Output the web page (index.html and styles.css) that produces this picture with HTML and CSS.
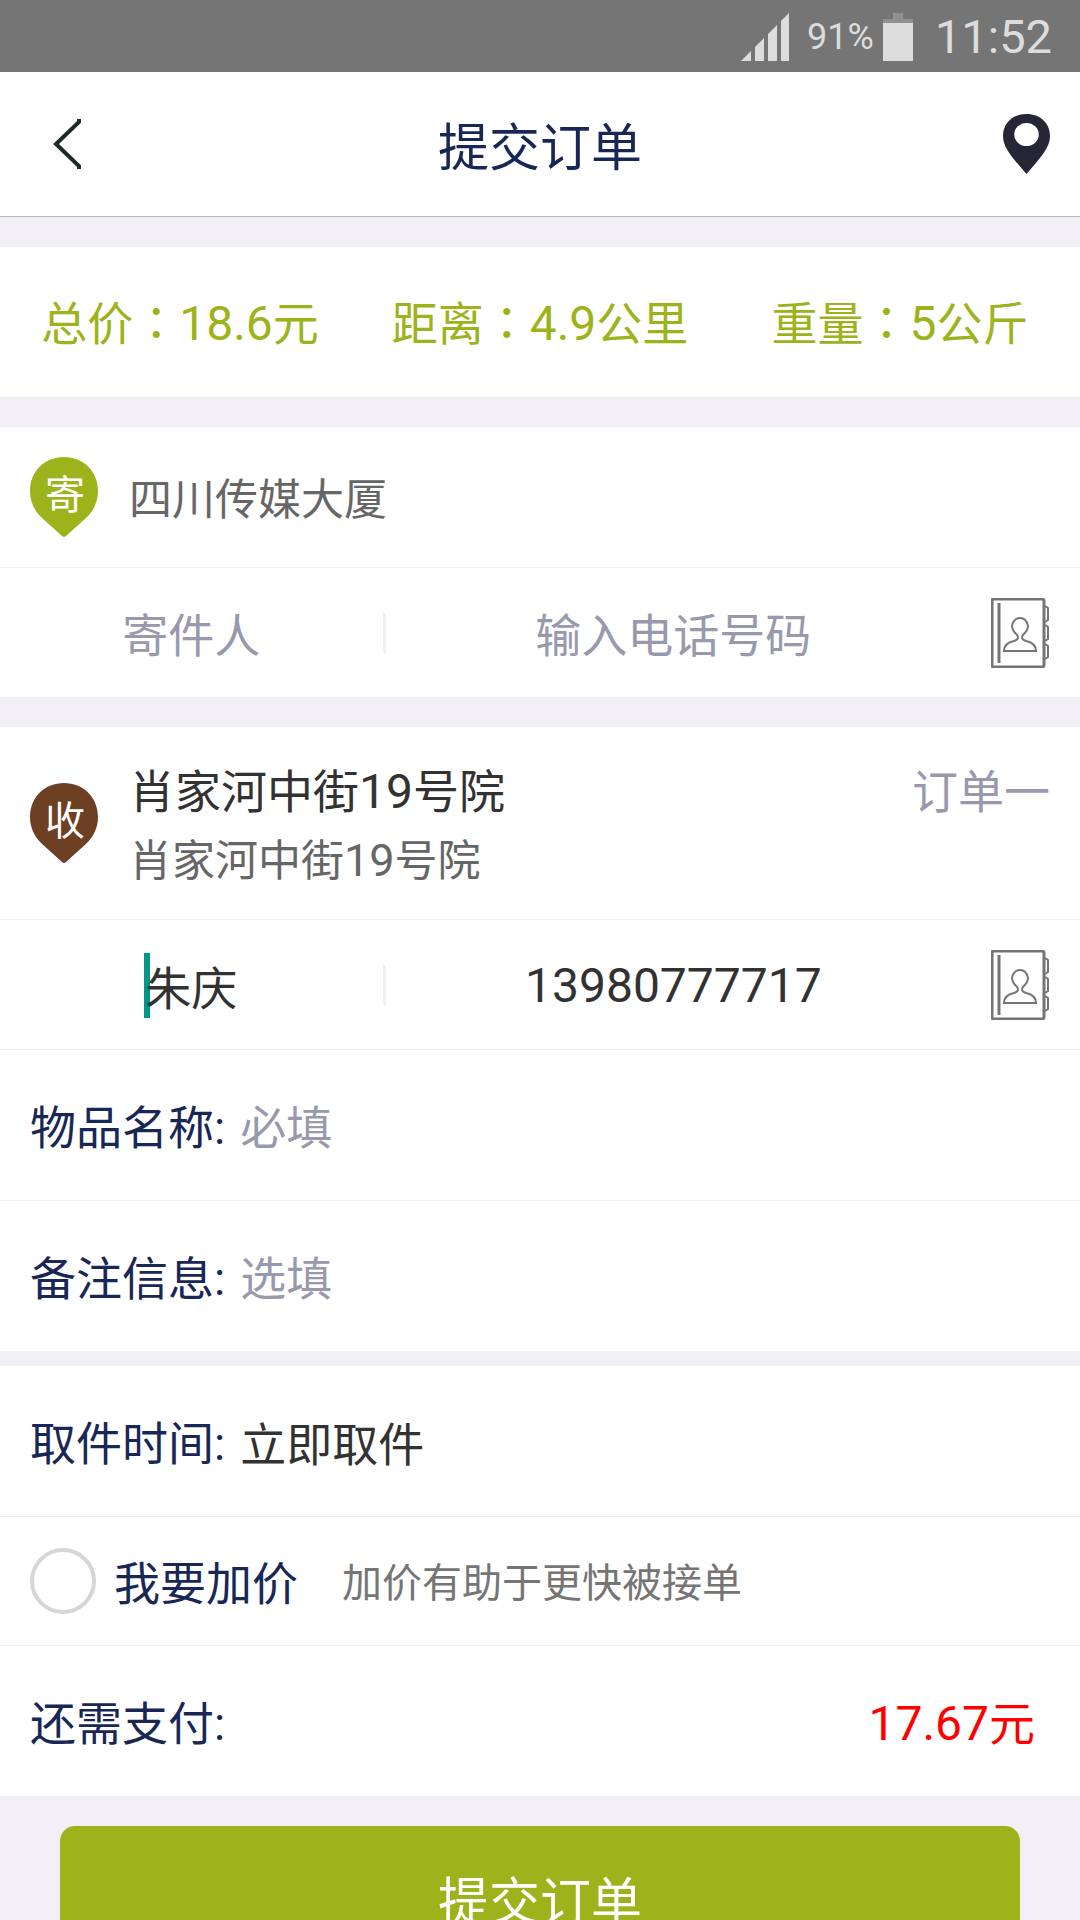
FILE: index.html
```html
<!DOCTYPE html>
<html lang="zh-CN">
<head>
<meta charset="utf-8">
<meta name="viewport" content="width=device-width, initial-scale=1">
<title>提交订单</title>
<link rel="stylesheet" href="styles.css">
</head>
<body>
<div class="screen">
  <div class="status">
    <svg class="status-signal" width="48" height="48" viewBox="0 0 48 48" aria-hidden="true">
      <path d="M0 48L10 38V48ZM14 48V34L23 25V48ZM27 48V21L36 12V48ZM40 48V8L48 0V48Z"/>
    </svg>
    <span class="status-percent">91%</span>
    <svg class="status-battery" width="30" height="48" viewBox="0 0 30 48" aria-hidden="true">
      <path class="battery-empty" d="M10 0H20V6H30V10H0V6H10Z"/>
      <path d="M0 10H30V48H0Z"/>
    </svg>
    <span class="status-time">11:52</span>
  </div>

  <header class="header">
    <button class="icon-button" type="button" aria-label="返回">
      <svg width="30" height="52" viewBox="0 0 30 52" aria-hidden="true">
        <path class="back-stroke" d="M27 1V4L4 26L27 48V51"/>
      </svg>
    </button>
    <h1 class="header-title">提交订单</h1>
    <button class="icon-button icon-button-end" type="button" aria-label="位置">
      <svg width="47" height="60" viewBox="0 0 48 60" preserveAspectRatio="none" aria-hidden="true">
        <path class="marker" fill-rule="evenodd" d="M24 0C10 0 0 9 0 22C0 34 10 44 24 60C38 44 48 34 48 22C48 9 38 0 24 0ZM24 9A12 11 0 1 1 24 32A12 11 0 1 1 24 9Z"/>
      </svg>
    </button>
  </header>

  <main class="content">
    <section class="card summary">
      <span>总价<span class="colon" lang="zh-TW">：</span><span class="num">18.6</span>元</span>
      <span>距离<span class="colon" lang="zh-TW">：</span><span class="num">4.9</span>公里</span>
      <span>重量<span class="colon" lang="zh-TW">：</span><span class="num">5</span>公斤</span>
    </section>

    <section class="card">
      <div class="row address">
        <svg class="pin pin-send" width="68" height="80" viewBox="0 0 68 80" role="img" aria-label="寄">
          <path d="M34 0C15 0 0 14 0 34C0 44 4 53 11 60L32 79Q34 81 36 79L57 60C64 53 68 44 68 34C68 14 53 0 34 0Z"/>
          <text x="35" y="52">寄</text>
        </svg>
        <p class="address-detail address-only">四川传媒大厦</p>
      </div>
      <div class="row contact">
        <div class="contact-name"><input class="input centered" type="text" placeholder="寄件人" aria-label="寄件人"></div>
        <input class="input centered contact-phone" type="tel" placeholder="输入电话号码" aria-label="寄件人电话号码">
        <button class="book-button" type="button" aria-label="通讯录">
          <svg class="book" width="58" height="70" viewBox="0 0 58 70" aria-hidden="true">
            <rect x="1" y="1" width="52" height="68" rx="2"/>
            <path class="book-spine" d="M8 5V65"/>
            <path d="M54 8L57 10V22L54 24M54 27L57 29V41L54 43M54 46L57 48V59L54 61"/>
            <path d="M13 53H45C45 46 40 44 35 43Q29 41 32 37C35 34 37 32 37 28C36 23 33 20 29 20C25 20 22 23 21 28C21 32 23 34 26 37Q29 41 23 43C18 44 13 46 13 53Z"/>
          </svg>
        </button>
      </div>
    </section>

    <section class="card">
      <div class="row address">
        <svg class="pin pin-receive" width="68" height="80" viewBox="0 0 68 80" role="img" aria-label="收">
          <path d="M34 0C15 0 0 14 0 34C0 44 4 53 11 60L32 79Q34 81 36 79L57 60C64 53 68 44 68 34C68 14 53 0 34 0Z"/>
          <text x="35" y="52">收</text>
        </svg>
        <div class="address-text">
          <div class="address-head">
            <h2 class="address-title">肖家河中街<span class="num">19</span>号院</h2>
            <span class="order-index">订单一</span>
          </div>
          <p class="address-detail">肖家河中街<span class="num-small">19</span>号院</p>
        </div>
      </div>
      <div class="row contact">
        <div class="contact-name">
          <span class="caret"></span>
          <input class="input input-filled centered" type="text" value="朱庆" aria-label="收件人">
        </div>
        <input class="input input-filled centered contact-phone contact-number" type="tel" value="13980777717" aria-label="收件人电话号码">
        <button class="book-button" type="button" aria-label="通讯录">
          <svg class="book" width="58" height="70" viewBox="0 0 58 70" aria-hidden="true">
            <rect x="1" y="1" width="52" height="68" rx="2"/>
            <path class="book-spine" d="M8 5V65"/>
            <path d="M54 8L57 10V22L54 24M54 27L57 29V41L54 43M54 46L57 48V59L54 61"/>
            <path d="M13 53H45C45 46 40 44 35 43Q29 41 32 37C35 34 37 32 37 28C36 23 33 20 29 20C25 20 22 23 21 28C21 32 23 34 26 37Q29 41 23 43C18 44 13 46 13 53Z"/>
          </svg>
        </button>
      </div>
      <div class="row field">
        <label class="label" for="goods">物品名称:</label>
        <input class="input" id="goods" type="text" placeholder="必填">
      </div>
      <div class="row field">
        <label class="label" for="remark">备注信息:</label>
        <input class="input" id="remark" type="text" placeholder="选填">
      </div>
    </section>

    <section class="card card-close">
      <div class="row field">
        <label class="label" for="pickup">取件时间:</label>
        <input class="input input-filled" id="pickup" type="text" value="立即取件" readonly>
      </div>
      <div class="row extra">
        <input class="check" id="extra" type="checkbox">
        <label class="label" for="extra">我要加价</label>
        <span class="hint">加价有助于更快被接单</span>
      </div>
      <div class="row field pay">
        <span class="label">还需支付:</span>
        <span class="pay-amount"><span class="num">17.67</span>元</span>
      </div>
    </section>

    <div class="actions">
      <button class="submit" type="button">提交订单</button>
    </div>
  </main>
</div>
</body>
</html>
```
FILE: styles.css
```css
* {
  box-sizing: border-box;
  margin: 0;
}

body {
  background: #f1eff5;
  color: #323232;
  font-family: Roboto, "Noto Sans CJK SC", sans-serif;
  font-size: 46px;
  line-height: 54px;
}

button,
input {
  padding: 0;
  border: 0;
  background: none;
  color: inherit;
  font: inherit;
}

svg {
  display: block;
  flex: none;
}

.num {
  font-size: 48px;
  line-height: 1;
}

.num-small {
  font-size: 45px;
  line-height: 1;
}

.colon {
  font-family: "Noto Sans CJK TC", sans-serif;
  line-height: 1;
}

.screen {
  display: flex;
  flex-direction: column;
  height: 100vh;
}

/* Status bar */
.status {
  display: flex;
  flex: none;
  align-items: center;
  justify-content: flex-end;
  padding: 10px 28px 8px;
  background: #757575;
  color: #dcdcdc;
  fill: #dcdcdc;
}

.status-percent {
  margin: 0 9px 0 18px;
  font-size: 36px;
}

.status-time {
  margin-left: 22px;
  font-size: 47px;
}

.battery-empty {
  fill: #919191;
}

/* Header */
.header {
  display: flex;
  flex: none;
  align-items: center;
  justify-content: space-between;
  padding: 40px 30px;
  border-bottom: 1px solid #b9bcbc;
  background: #fff;
}

.icon-button {
  display: flex;
  justify-content: center;
  min-width: 74px;
}

.icon-button-end {
  justify-content: flex-end;
}

.back-stroke {
  fill: none;
  stroke: #1f2a28;
  stroke-width: 4;
}

.marker {
  fill: #272636;
}

.header-title {
  padding-top: 10px;
  color: #182755;
  font-size: 51px;
  font-weight: 400;
}

/* Cards */
.content {
  flex: 1;
  min-height: 0;
  overflow-y: auto;
  scrollbar-width: none;
}

.card {
  margin-top: 30px;
  background: #fff;
}

.card-close {
  margin-top: 15px;
}

.summary {
  display: grid;
  grid-template-columns: repeat(3, 1fr);
  padding: 50px 0 46px;
  color: #9db31b;
  text-align: center;
}

.row {
  display: flex;
  align-items: center;
  border-bottom: 1px solid #efefef;
}

.row:last-child {
  border-bottom: 0;
}

/* Addresses */
.address {
  gap: 31px;
  padding: 30px;
}

.pin-send {
  fill: #9db31b;
}

.pin-receive {
  fill: #6d4024;
}

.pin text {
  fill: #fff;
  font-size: 40px;
  text-anchor: middle;
}

.address-text {
  flex: 1;
  padding: 8px 0 1px;
}

.address-head {
  display: flex;
  justify-content: space-between;
  margin-bottom: 15px;
}

.address-title {
  font-size: 46px;
  font-weight: 400;
}

.address-detail {
  color: #666;
  font-size: 43px;
}

.address-only {
  padding-top: 6px;
}

.order-index {
  color: #9999ad;
}

/* Contact lines */
.contact {
  padding: 30px 0 29px;
}

.contact-name {
  position: relative;
  display: flex;
  flex: 0 0 calc(100% * 5 / 14);
  align-items: center;
  height: 40px;
  border-right: 3px solid #f1eff5;
}

.contact-phone {
  flex: 1;
}

.contact-number {
  font-size: 48px;
}

.book-button {
  padding: 0 31px 0 30px;
}

.book {
  fill: none;
  stroke: #757575;
  stroke-width: 2;
}

.book rect,
.book-spine {
  stroke-width: 3;
}

.input {
  width: 100%;
  min-width: 0;
  height: 60px;
  padding-top: 6px;
  outline: 0;
}

.input::placeholder {
  color: #9999ad;
  opacity: 1;
}

.input-filled {
  padding-top: 0;
}

.centered {
  position: relative;
  text-align: center;
}

.caret {
  position: absolute;
  left: calc(50% - 47px);
  width: 6px;
  height: 65px;
  background: #009688;
}

/* Fields */
.field {
  gap: 15px;
  padding: 45px 30px;
}

.label,
.hint,
.pay-amount {
  flex: none;
  padding-top: 6px;
}

.label {
  color: #182755;
}

.extra {
  padding: 31px 30px;
}

.check {
  flex: none;
  width: 66px;
  height: 66px;
  margin-right: 18px;
  border: 4px solid #d6d6d6;
  border-radius: 50%;
  appearance: none;
}

.check:checked {
  background: #9db31b;
}

.hint {
  margin-left: 44px;
  color: #757575;
  font-size: 40px;
}

.pay {
  justify-content: space-between;
  padding-right: 45px;
}

.pay-amount {
  color: #f00;
}

/* Submit */
.actions {
  padding: 30px 60px;
}

.submit {
  width: 100%;
  padding: 50px 0 42px;
  border-radius: 15px;
  background: #9db31b;
  color: #fff;
  font-size: 51px;
}
```
